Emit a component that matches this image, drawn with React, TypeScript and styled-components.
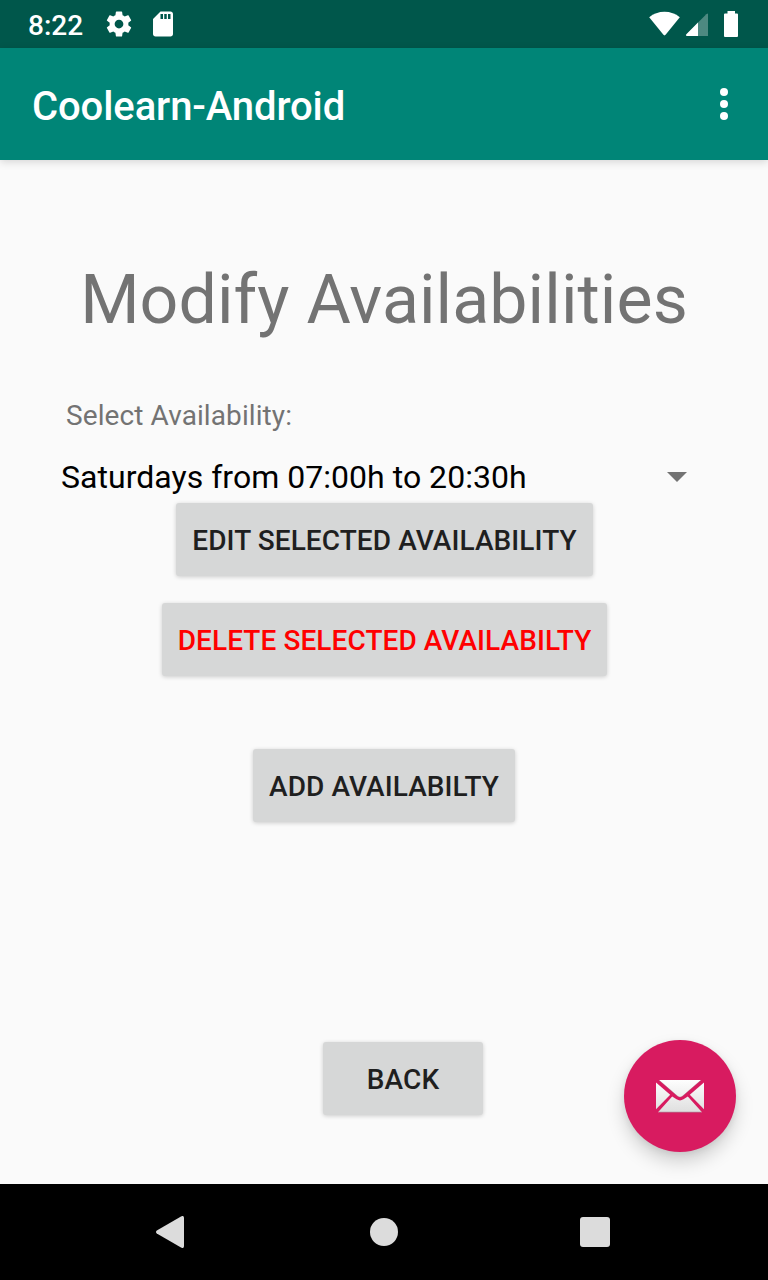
import React from 'react';
import styled, { createGlobalStyle } from 'styled-components';

const GlobalStyle = createGlobalStyle`
  * { box-sizing: border-box; }
  body {
    margin: 0;
    background: #fafafa;
    font-family: Roboto, 'Liberation Sans', sans-serif;
  }
`;

const Screen = styled.div`
  display: flex;
  flex-direction: column;
  width: 768px;
  height: 1280px;
  overflow: hidden;
  position: relative;
  background: #fafafa;
`;

const StatusBar = styled.header`
  display: flex;
  align-items: center;
  height: 48px;
  flex: none;
  padding: 0 29px 0 28px;
  background: #00574b;
  color: #fff;
`;

const Clock = styled.span`
  width: 76px;
  padding-top: 3px;
  font-size: 28px;
  font-weight: 500;
  line-height: 33px;
`;

const NoticeIcons = styled.div`
  display: flex;
  flex: 1;
  gap: 14px;
`;

const Icon = styled.svg`
  display: block;
  flex: none;
`;

const AppBar = styled.div`
  display: flex;
  align-items: center;
  justify-content: space-between;
  height: 112px;
  flex: none;
  padding: 0 40px 0 32px;
  background: #008577;
  box-shadow: 0 2px 8px rgba(0, 0, 0, 0.15);
`;

const AppTitle = styled.h1`
  margin: 0;
  padding-top: 4px;
  color: #fff;
  font-size: 40px;
  font-weight: 500;
  letter-spacing: -0.1px;
  line-height: 47px;
`;

const MenuButton = styled.button`
  padding: 0;
  border: 0;
  background: none;
`;

const Content = styled.main`
  display: flex;
  flex-direction: column;
  align-items: center;
  flex: 1;
  padding-top: 100px;
`;

const Heading = styled.h2`
  margin: 0;
  color: #737373;
  font-size: 68px;
  font-weight: 400;
  letter-spacing: 0.1px;
  line-height: 80px;
  white-space: nowrap;
`;

const Label = styled.label`
  align-self: flex-start;
  margin: 59px 0 0 66px;
  color: #737373;
  font-size: 28px;
  letter-spacing: 0.09px;
  line-height: 33px;
`;

const Spinner = styled.div`
  display: flex;
  align-items: center;
  justify-content: space-between;
  align-self: stretch;
  height: 48px;
  margin: 21px 81px 2px 61px;
  color: #000;
  font-size: 32px;
  letter-spacing: 0.03px;
  line-height: 38px;
`;

const Button = styled.button<{ $width: number; $gap?: number; $shift?: number; $danger?: boolean }>`
  flex: none;
  width: ${p => p.$width}px;
  height: 73px;
  margin: ${p => p.$gap ?? 0}px 0 0 ${p => p.$shift ?? 0}px;
  padding: 2px 0 0;
  border: 0;
  border-radius: 3px;
  background: #d6d7d7;
  box-shadow: 0 1px 4px rgba(0, 0, 0, 0.19);
  color: ${p => (p.$danger ? '#ff0000' : '#1f1f1f')};
  font-family: inherit;
  font-size: 28px;
  font-weight: 500;
  letter-spacing: 0.08px;
  line-height: 33px;
  text-transform: uppercase;
  white-space: nowrap;
`;

const MailFab = styled.button`
  position: absolute;
  right: 32px;
  bottom: 128px;
  display: flex;
  align-items: center;
  justify-content: center;
  width: 112px;
  height: 112px;
  padding: 0;
  border: 0;
  border-radius: 50%;
  background: #d81b60;
  box-shadow: 0 10px 18px rgba(0, 0, 0, 0.17), 0 2px 6px rgba(0, 0, 0, 0.08);
`;

const NavBar = styled.nav`
  display: grid;
  grid-template-columns: 214px 210px 30px;
  align-items: center;
  height: 96px;
  flex: none;
  padding-left: 156px;
  background: #000;
`;

export default function App() {
  return (
    <Screen>
      <GlobalStyle />
      <StatusBar>
        <Clock>8:22</Clock>
        <NoticeIcons>
          <Icon width="30" height="30" viewBox="0 0 24 24" fill="#fff">
            <path d="M19.43 12.98c.04-.32.07-.64.07-.98s-.03-.66-.07-.98l2.11-1.65c.19-.15.24-.42.12-.64l-2-3.46c-.12-.22-.39-.3-.61-.22l-2.49 1c-.52-.4-1.08-.73-1.69-.98l-.38-2.65C14.46 2.18 14.25 2 14 2h-4c-.25 0-.46.18-.49.42l-.38 2.65c-.61.25-1.17.59-1.69.98l-2.49-1c-.23-.09-.49 0-.61.22l-2 3.46c-.13.22-.07.49.12.64l2.11 1.65c-.04.32-.07.65-.07.98s.03.66.07.98l-2.11 1.65c-.19.15-.24.42-.12.64l2 3.46c.12.22.39.3.61.22l2.49-1c.52.4 1.08.73 1.69.98l.38 2.65c.03.24.24.42.49.42h4c.25 0 .46-.18.49-.42l.38-2.65c.61-.25 1.17-.59 1.69-.98l2.49 1c.23.09.49 0 .61-.22l2-3.46c.12-.22.07-.49-.12-.64l-2.11-1.65zM12 15.5c-1.93 0-3.5-1.57-3.5-3.5s1.57-3.5 3.5-3.5 3.5 1.57 3.5 3.5-1.57 3.5-3.5 3.5z" />
          </Icon>
          <Icon width="30" height="30" viewBox="0 0 24 24" fill="#fff">
            <path d="M18 2h-8L4.02 8 4 20c0 1.1.9 2 2 2h12c1.1 0 2-.9 2-2V4c0-1.1-.9-2-2-2zm-6 6h-2V4h2v4zm3 0h-2V4h2v4zm3 0h-2V4h2v4z" />
          </Icon>
        </NoticeIcons>
        <Icon width="90" height="48" viewBox="649 0 90 48" fill="#fff">
          <path d="M649.2 17.2C657.5 9.8 671.5 9.8 679.8 17.2L665.8 34.6Q664.5 36.2 663.2 34.6L649.2 17.2Z" />
          <path d="M708 14v22h-21.2q-1.6-.6-.4-1.8L706.3 14.3Q708 13 708 14Z" opacity=".3" />
          <path d="M698 22.5V36h-11.2q-1.6-.6-.4-1.8Z" />
          <path d="M727.5 11h7.5v2.5h2q1 0 1 1V36q0 1-1 1h-12q-1 0-1-1V14.5q0-1 1-1h2.5Z" />
        </Icon>
      </StatusBar>
      <AppBar>
        <AppTitle>Coolearn-Android</AppTitle>
        <MenuButton aria-label="More options">
          <Icon width="8" height="32" viewBox="0 0 8 32" fill="#fff">
            <circle cx="4" cy="4" r="4" />
            <circle cx="4" cy="16" r="4" />
            <circle cx="4" cy="28" r="4" />
          </Icon>
        </MenuButton>
      </AppBar>
      <Content>
        <Heading>Modify Availabilities</Heading>
        <Label>Select Availability:</Label>
        <Spinner>
          <span>Saturdays from 07:00h to 20:30h</span>
          <Icon width="20" height="10" viewBox="0 0 20 10" fill="#737373">
            <path d="M0 0h20L10 10Z" />
          </Icon>
        </Spinner>
        <Button $width={417} $shift={1}>Edit selected availability</Button>
        <Button $width={445} $gap={27} $shift={1} $danger>Delete selected availabilty</Button>
        <Button $width={262} $gap={73}>Add availabilty</Button>
        <Button $width={160} $gap={220} $shift={38}>Back</Button>
      </Content>
      <NavBar>
        <Icon width="28" height="32" viewBox="0 0 28 32" fill="#dcdcdc">
          <path d="M25 .4Q28-1 28 2v28q0 3-3 1.6L.8 17.4Q-.8 16 .8 14.6Z" />
        </Icon>
        <Icon width="28" height="28" viewBox="0 0 28 28" fill="#dcdcdc">
          <circle cx="14" cy="14" r="14" />
        </Icon>
        <Icon width="30" height="30" viewBox="0 0 30 30" fill="#dcdcdc">
          <rect width="30" height="30" rx="3" />
        </Icon>
      </NavBar>
      <MailFab aria-label="Mail">
        <Icon width="48" height="34" viewBox="0 0 48 34">
          <defs>
            <linearGradient id="paper" x1="0" y1="0" x2="0" y2="34" gradientUnits="userSpaceOnUse">
              <stop offset="0" stopColor="#fff" />
              <stop offset="1" stopColor="#dedede" />
            </linearGradient>
          </defs>
          <g fill="url(#paper)">
            <path d="M3 1h42L26.5 17Q24 19.2 21.5 17Z" />
            <path d="M0 3.5L14.2 15.8 0 30.2Z" />
            <path d="M48 3.5L33.8 15.8 48 30.2Z" />
            <path d="M16.2 17.5L20.5 20.3Q24 22.6 27.5 20.3L31.8 17.5 46 33.2H2Z" />
          </g>
          <path d="M3 33.2h42" stroke="#8f4a66" strokeOpacity=".6" strokeWidth=".8" />
          <path d="M3 1.2L21.5 17.1Q24 19.3 26.5 17.1L45 1.2" fill="none" stroke="#8d8d8d" strokeOpacity=".6" strokeWidth=".5" />
        </Icon>
      </MailFab>
    </Screen>
  );
}
